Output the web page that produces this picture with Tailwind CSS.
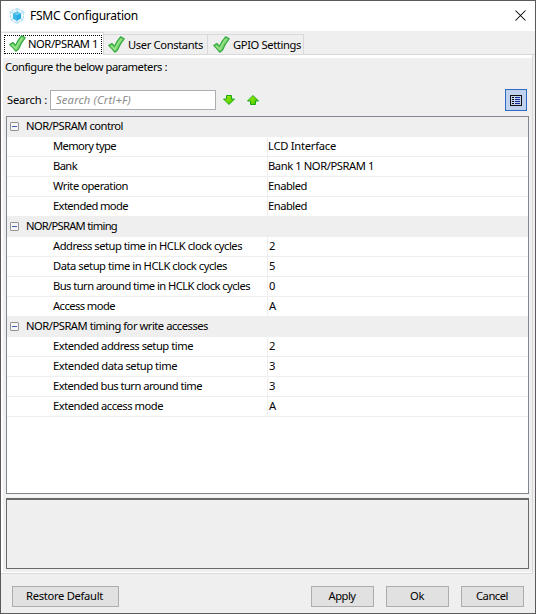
<!DOCTYPE html>
<html lang="en">
<head>
<meta charset="utf-8">
<title>FSMC Configuration</title>
<script src="https://cdn.jsdelivr.net/npm/@tailwindcss/browser@4"></script>
</head>
<body class="overflow-hidden">
<svg class="absolute h-0 w-0">
  <symbol id="check" viewBox="0 0 17 17"><path d="M.8 9.600 3.800 7.500 6.600 10.200Q9 4.500 12.600.800L16.200 2.800Q12 7.500 9.400 14.200L6.800 16.200Q4 12.500.8 9.600Z" fill="#78d56d" stroke="#36a840" stroke-width="1.200" stroke-linejoin="round"/><path d="M3 9.800 6.700 13.500Q9.500 7 13.300 3" stroke="#9be48d" stroke-width="1.200" fill="none"/></symbol>
  <symbol id="minus" viewBox="0 0 9 9"><rect x=".5" y=".5" width="8" height="8" rx=".6" fill="#f5f5f5" stroke="#919191"/><path d="M2 4.5h5" stroke="#3f5fb0"/></symbol>
  <linearGradient id="lime" x1="0" x2="1" y1="0" y2="1"><stop offset="0" stop-color="#b4f000"/><stop offset="1" stop-color="#2fc400"/></linearGradient>
</svg>
<div class="flex h-[614px] w-[536px] flex-col border border-[#5b595b] bg-[#efefef] font-['Noto_Sans','Open_Sans',sans-serif] text-[11.2px] leading-5 whitespace-nowrap text-black">
  <header class="flex h-[30px] shrink-0 items-center bg-white pl-2">
    <svg class="h-4 w-4" viewBox="0 0 16 16"><path d="M8 .5 15 3.5 14 12 8 15.5 2 12 1 3.5Z" fill="#eaf7fd" stroke="#a9dcf3" stroke-width="1" stroke-dasharray="3 1"/><path d="M1 3.5 4 5M15 3.5 12 5M8 12v3.5M8 .5v3M2 12l2.5-1.5M14 12l-2.500-1.500" stroke="#a9dcf3"/><path d="M8 3.5 12 5.500v5L8 12.700 4 10.500v-5Z" fill="#27aae1"/><path d="M8 3.500 12 5.500 8 7.500 4 5.500Z" fill="#65caf0"/><path d="M8 7.500v5.200l-4-2.200v-5Z" fill="#3bb6e8"/></svg>
    <span class="ml-[5px] text-[12px]" data-w="108">FSMC Configuration</span>
    <svg class="mr-[9px] mb-px ml-auto h-[11px] w-[11px]" viewBox="0 0 11 11"><path d="M.5.500 10.500 10.500M10.500.500.500 10.500" stroke="#000" stroke-width="1.050"/></svg>
  </header>

  <nav class="flex h-6 shrink-0 items-end pl-px">
    <div class="flex h-[23px] w-[102px] border-t border-r border-[#d9d9d9] bg-white pt-[2px] pl-[2px]">
      <div class="flex h-[19px] w-[98px] items-center border border-dotted border-black pl-[4px]">
        <svg class="h-[17px] w-[17px] shrink-0 -translate-y-px"><use href="#check"/></svg>
        <span class="ml-[2px] -translate-y-px" data-w="70">NOR/PSRAM 1</span>
      </div>
    </div>
    <div class="flex h-[21px] w-[104px] items-center border-y border-r border-[#d9d9d9] pl-[4px]">
      <svg class="h-[17px] w-[17px] shrink-0"><use href="#check"/></svg>
      <span class="ml-[3px]" data-w="75">User Constants</span>
    </div>
    <div class="flex h-[21px] w-[96px] items-center border-y border-r border-[#d9d9d9] pl-[5px]">
      <svg class="h-[17px] w-[17px] shrink-0"><use href="#check"/></svg>
      <span class="ml-[3px]" data-w="68">GPIO Settings</span>
    </div>
    <div class="h-px grow bg-[#d9d9d9]"></div>
  </nav>

  <main class="mr-[2px] flex h-[519px] shrink-0 flex-col border-r border-b border-[#d9d9d9]">
    <div class="flex grow flex-col border-t-[3px] border-b border-l-[2px] border-white pr-[3px] pl-[3px]">
      <p class="h-5 -translate-x-px -translate-y-px" data-w="162">Configure the below parameters :</p>
      <div class="mt-[11px] flex h-[22px] items-center">
        <span class="ml-px w-[43px]"><span data-w="40">Search :</span></span>
        <div class="flex h-5 w-[166px] items-center border border-[#abadb3] bg-white pl-[5px] text-[#8b8b8b] italic"><span data-w="75">Search (Crtl+F)</span></div>
        <svg class="ml-[7px] h-[10px] w-3" viewBox="0 0 12 10"><path d="M3.500.500h5v3.500h3L6 9.500.500 4h3Z" fill="url(#lime)" stroke="#1ba51b"/></svg>
        <svg class="ml-3 h-[10px] w-3" viewBox="0 0 12 10"><path d="M3.500 9.500h5v-3.500h3L6 .500.500 6h3Z" fill="url(#lime)" stroke="#1ba51b"/></svg>
        <div class="mr-[2px] ml-auto flex h-[22px] w-[22px] border border-[#316ac5] bg-[#c1d2ee] pt-[5px] pl-1">
          <svg class="h-[11px] w-3" viewBox="0 0 12 11" shape-rendering="crispEdges"><rect x=".5" y=".5" width="11" height="10" fill="#c1d2ee" stroke="#111"/><path d="M2 2.500h2M2 4.500h2M2 6.500h2M2 8.500h2" stroke="#111"/><path d="M5 2.500h5M5 4.500h5M5 6.500h5M5 8.500h5" stroke="#142a92"/></svg>
        </div>
      </div>
      <section id="grid" class="mt-[5px] h-[378px] shrink-0 border border-[#828790] bg-white"></section>
      <div class="mt-px h-[2px] shrink-0 bg-[#f8f8f8]"></div>
      <section class="mt-px h-[71px] shrink-0 border border-t-2 border-[#696969]"></section>
    </div>
  </main>

  <footer class="flex grow items-start pt-3 pl-[11px]">
    <button class="flex h-[21px] w-[107px] items-center justify-center border border-[#adadad] bg-[#e1e1e1] pr-[2px] pb-[2px]"><span data-w="77">Restore Default</span></button>
    <button class="ml-[192px] flex h-[21px] w-[63px] items-center justify-center border border-[#adadad] bg-[#e1e1e1] pr-px pb-[2px]"><span data-w="27">Apply</span></button>
    <button class="ml-3 flex h-[21px] w-[63px] items-center justify-center border border-[#adadad] bg-[#e1e1e1] pr-px pb-[2px]"><span data-w="14">Ok</span></button>
    <button class="ml-3 flex h-[21px] w-[63px] items-center justify-center border border-[#adadad] bg-[#e1e1e1] pr-px pb-[2px]"><span data-w="32">Cancel</span></button>
  </footer>
</div>
<script>
const groups = [
  ['NOR/PSRAM control', 97, [['Memory type', 63, 'LCD Interface', 68], ['Bank', 24, 'Bank 1 NOR/PSRAM 1', 106], ['Write operation', 75, 'Enabled', 39], ['Extended mode', 75, 'Enabled', 39]]],
  ['NOR/PSRAM timing', 91, [['Address setup time in HCLK clock cycles', 189, '2', 6], ['Data setup time in HCLK clock cycles', 174, '5', 6], ['Bus turn around time in HCLK clock cycles', 197, '0', 6], ['Access mode', 62, 'A', 7]]],
  ['NOR/PSRAM timing for write accesses', 182, [['Extended address setup time', 140, '2', 6], ['Extended data setup time', 124, '3', 6], ['Extended bus turn around time', 149, '3', 6], ['Extended access mode', 110, 'A', 7]]]
];
document.getElementById('grid').innerHTML = groups.map(([title, tw, rows]) =>
  `<div class="flex h-5 items-center bg-[#efefef] pl-[3px] leading-[18px]"><svg class="mb-px h-[9px] w-[9px]"><use href="#minus"/></svg><span class="ml-[7px] -translate-y-px" data-w="${tw}">${title}</span></div>` +
  rows.map(([name, nw, value, vw]) =>
    `<div class="flex h-5 border-b border-[#efefef] leading-[18px]"><div class="w-[261px] border-r border-[#efefef] pl-[46px]"><span data-w="${nw}">${name}</span></div><div class="${value.length === 1 ? 'pl-px' : ''}"><span data-w="${vw}">${value}</span></div></div>`).join('')
).join('');
// Fit every label to its set width by spreading the difference between its letters.
function fitLabels() {
  for (const el of document.querySelectorAll('[data-w]')) {
    const n = el.textContent.length;
    if (n < 2) continue;
    el.style.letterSpacing = '0px';
    const range = document.createRange();
    range.selectNodeContents(el);
    el.style.letterSpacing = (el.dataset.w - range.getBoundingClientRect().width) / n + 'px';
  }
}
window.addEventListener('load', () => { fitLabels(); requestAnimationFrame(fitLabels); });
new ResizeObserver(fitLabels).observe(document.body);
</script>
</body>
</html>
